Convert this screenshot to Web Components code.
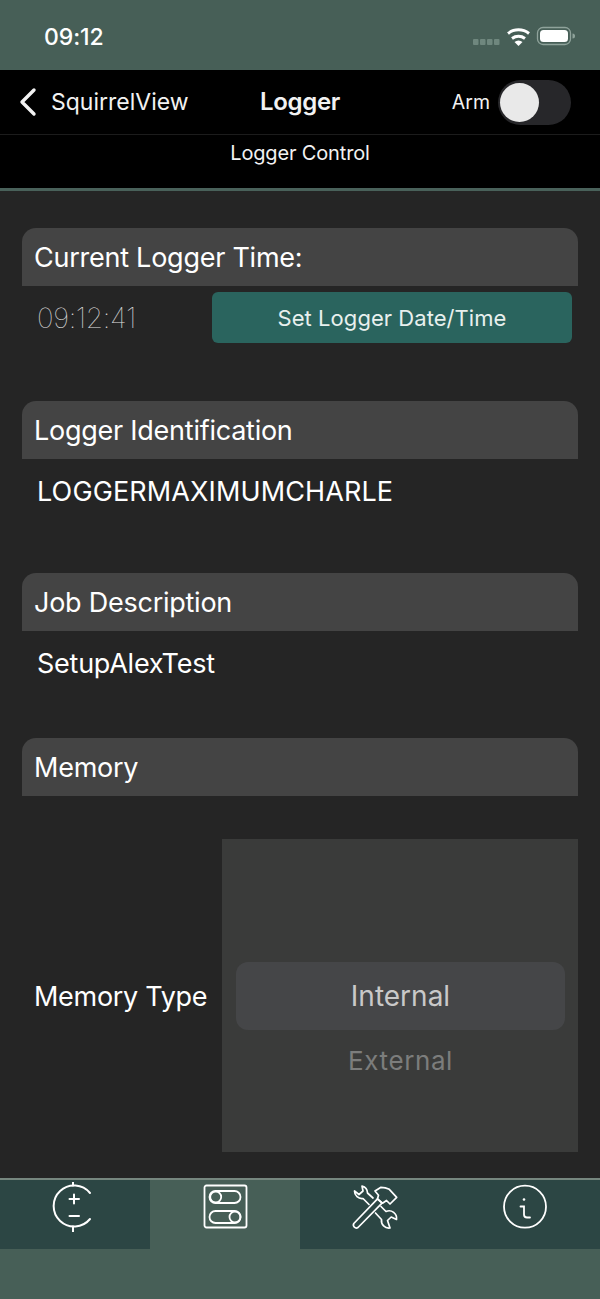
<!DOCTYPE html>
<html>
<head>
<meta charset="utf-8">
<title>Logger</title>
<style>
  html, body { margin: 0; padding: 0; background: #252525; }
  body { width: 600px; height: 1299px; overflow: hidden; font-family: Inter, "Liberation Sans", sans-serif; color: #fff; }
  app-screen { height: 1299px; }
</style>
</head>
<body>
<app-screen>
  <status-bar slot="top" time="09:12"></status-bar>
  <nav-bar slot="top" back="SquirrelView" title="Logger" subtitle="Logger Control"></nav-bar>

  <logger-section heading="Current Logger Time:" gap="56">
    <div style="display:flex;align-items:flex-start;padding:6px 6px 0 15px;">
      <span style="width:175px;font-size:28px;font-weight:100;line-height:53px;color:#e0e0e0;letter-spacing:-.35px;">09:12:41</span>
      <action-button>Set Logger Date/Time</action-button>
    </div>
  </logger-section>
  <logger-section heading="Logger Identification" gap="64">
    <field-value style="letter-spacing:.12px">LOGGERMAXIMUMCHARLE</field-value>
  </logger-section>
  <logger-section heading="Job Description" gap="57">
    <field-value>SetupAlexTest</field-value>
  </logger-section>
  <logger-section heading="Memory" gap="0">
    <memory-row label="Memory Type">
      <wheel-picker selected="Internal" next="External"></wheel-picker>
    </memory-row>
  </logger-section>

  <tab-bar slot="bottom">
    <tab-item>
      <svg viewBox="0 0 50 50" width="50" height="50" fill="none" stroke="#fff" stroke-width="2" stroke-linecap="round">
        <path d="M40 11A20.500 20.500 0 1 0 40 37"/>
        <path d="M23 0v3.500M23 44.500V50M19.500 17h9.500M24 12.500v9M19.500 34h9.500"/>
      </svg>
    </tab-item>
    <tab-item active>
      <svg viewBox="0 0 50 50" width="50" height="50" fill="none" stroke="#fff" stroke-width="1.800">
        <rect x="4.500" y="3.500" width="42" height="42" rx="2"/>
        <rect x="9.500" y="9" width="31" height="12" rx="6"/>
        <circle cx="15.700" cy="15" r="5.500"/>
        <rect x="9.500" y="29" width="31" height="12" rx="6"/>
        <circle cx="35" cy="35" r="5.500"/>
      </svg>
    </tab-item>
    <tab-item>
      <svg viewBox="0 0 50 50" width="50" height="50" fill="none" stroke="#fff" stroke-width="1.700" stroke-linejoin="round" stroke-linecap="round">
        <path d="M3.800 41.500 27.500 16.800l4.500 4.400L8 45.500a3 3 0 0 1-4.200-4Z"/>
        <path d="M25 9l6-3.700q4.500 0 8.300 2L46.700 15.300 40 22l-3.500-3.500-4 2.700-5-4.400 1-3.500Z"/>
        <path d="M23 16 17.500 11a7.500 7.500 0 0 0-5.500-7l1 5-4 3.500-4.500-3.500a7.500 7.500 0 0 0 8.500 7.500l6 6"/>
        <path d="M31 24.500 36 29.500a7.500 7.500 0 0 1 10.500 8l-5.300-2.500-3.700 3.500 2.500 7.500a7.500 7.500 0 0 1-8.500-8.500L25.500 31"/>
      </svg>
    </tab-item>
    <tab-item>
      <svg viewBox="0 0 50 50" width="50" height="50" fill="none" stroke="#fff" stroke-width="1.800">
        <circle cx="25" cy="24.700" r="21"/>
        <path d="M20.500 24.500h3.500v8q0 3 3 3h3" stroke-linecap="round"/>
        <circle cx="24" cy="17.500" r="1.300" fill="#fff" stroke="none"/>
      </svg>
    </tab-item>
  </tab-bar>
</app-screen>

<script>
class AppScreen extends HTMLElement {
  constructor() {
    super();
    this.attachShadow({ mode: 'open' });
    this.shadowRoot.innerHTML = `
      <style>
        :host { display: flex; flex-direction: column; background: #252525; }
        .content { flex: 1; min-height: 0; padding: 37px 22px 0; }
      </style>
      <slot name="top"></slot>
      <div class="content"><slot></slot></div>
      <slot name="bottom"></slot>
    `;
  }
}

class StatusBar extends HTMLElement {
  connectedCallback() {
    this.attachShadow({ mode: 'open' });
    this.shadowRoot.innerHTML = `
      <style>
        :host { display: flex; align-items: flex-start; justify-content: space-between; height: 70px; background: #475f57; box-sizing: border-box; padding: 22px 10px 0 44px; }
        .time { font-size: 23px; font-weight: 500; line-height: 28px; margin-top: 1px; color: #fff; letter-spacing: -.1px; }
        svg { display: block; margin-top: 4px; }
      </style>
      <span class="time">${this.getAttribute('time')}</span>
      <svg width="138" height="26" viewBox="0 0 138 26">
        <g fill="#6f877e">
          <rect x="21" y="13" width="5.500" height="6" rx="1"/><rect x="28" y="13" width="5.500" height="6" rx="1"/>
          <rect x="35" y="13" width="5.500" height="6" rx="1"/><rect x="42" y="13" width="5.500" height="6" rx="1"/>
        </g>
        <g fill="none" stroke="#fff" stroke-width="3">
          <path d="M56 7.500a17 17 0 0 1 21 0"/>
          <path d="M60 12.500a11 11 0 0 1 13 0"/>
        </g>
        <path d="M62.500 16a6 6 0 0 1 8 0L66.500 20Z" fill="#fff"/>
        <rect x="85.500" y="1.500" width="33" height="17" rx="5.500" fill="none" stroke="#8fa39b" stroke-width="1.300"/>
        <rect x="88" y="4" width="28" height="12" rx="3.500" fill="#fff"/>
        <path d="M120.500 7.500v5a2.500 2.500 0 0 0 0-5Z" fill="#8fa39b"/>
      </svg>
    `;
  }
}

class NavBar extends HTMLElement {
  connectedCallback() {
    this.attachShadow({ mode: 'open' });
    this.shadowRoot.innerHTML = `
      <style>
        :host { display: block; background: #000; color: #f2f2f2; border-bottom: 3px solid #49615a; }
        .bar { display: grid; grid-template-columns: 1fr auto 1fr; align-items: center; height: 64px; border-bottom: 1px solid #1c1c1c; padding: 0 29px; }
        .back { display: flex; align-items: center; gap: 13px; margin-left: -10px; font-size: 23px; letter-spacing: 0; }
        .title { font-size: 24px; font-weight: 600; letter-spacing: -.3px; margin-top: -2px; }
        .arm { display: flex; align-items: center; justify-content: flex-end; gap: 8px; font-size: 19.500px; }
        .sub { height: 53px; box-sizing: border-box; padding-top: 5px; text-align: center; font-size: 20px; line-height: 26px; letter-spacing: -.15px; }
        .track { display: flex; align-items: center; width: 73px; height: 45px; border-radius: 23px; background: #27272a; box-sizing: border-box; padding: 0 2px; }
        .knob { width: 39px; height: 39px; border-radius: 50%; background: #e9e9e9; }
        svg { display: block; }
      </style>
      <div class="bar">
        <div class="back">
          <svg width="19" height="30" viewBox="0 0 19 30" fill="none" stroke="#f2f2f2" stroke-width="3.400" stroke-linecap="round" stroke-linejoin="round"><path d="M15 3 3 15l12 12"/></svg>
          <span>${this.getAttribute('back')}</span>
        </div>
        <div class="title">${this.getAttribute('title')}</div>
        <div class="arm"><span>Arm</span><div class="track"><div class="knob"></div></div></div>
      </div>
      <div class="sub">${this.getAttribute('subtitle')}</div>
    `;
  }
}

class LoggerSection extends HTMLElement {
  connectedCallback() {
    this.attachShadow({ mode: 'open' });
    this.shadowRoot.innerHTML = `
      <style>
        :host { display: block; margin-bottom: ${this.getAttribute('gap')}px; }
        .head { height: 58px; box-sizing: border-box; padding: 0 12px; display: flex; align-items: center; background: #444; border-radius: 14px 14px 0 0; font-size: 27px; letter-spacing: -.25px; color: #fff; }
      </style>
      <div class="head">${this.getAttribute('heading')}</div>
      <slot></slot>
    `;
  }
}

class ActionButton extends HTMLElement {
  constructor() {
    super();
    this.attachShadow({ mode: 'open' });
    this.shadowRoot.innerHTML = `
      <style>
        :host { display: flex; align-items: center; justify-content: center; flex: 1; height: 51px; border-radius: 6px; background: #2a645e; color: #e8f0ee; font-size: 22px; letter-spacing: .05px; }
      </style>
      <slot></slot>
    `;
  }
}

class FieldValue extends HTMLElement {
  constructor() {
    super();
    this.attachShadow({ mode: 'open' });
    this.shadowRoot.innerHTML = `
      <style>
        :host { display: block; padding: 16px 15px 0; font-size: 27px; line-height: 34px; letter-spacing: -.25px; color: #fff; }
      </style>
      <slot></slot>
    `;
  }
}

class MemoryRow extends HTMLElement {
  connectedCallback() {
    this.attachShadow({ mode: 'open' });
    this.shadowRoot.innerHTML = `
      <style>
        :host { display: flex; align-items: center; margin-top: 43px; }
        .label { width: 200px; padding: 2px 0 0 12px; box-sizing: border-box; font-size: 27px; letter-spacing: -.3px; color: #fff; }
      </style>
      <div class="label">${this.getAttribute('label')}</div>
      <slot></slot>
    `;
  }
}

class WheelPicker extends HTMLElement {
  connectedCallback() {
    this.attachShadow({ mode: 'open' });
    this.shadowRoot.innerHTML = `
      <style>
        :host { display: flex; flex-direction: column; flex: 1; height: 313px; box-sizing: border-box; padding: 123px 13px 0 14px; background: #3a3b3a; }
        .sel { height: 68px; display: flex; align-items: center; justify-content: center; border-radius: 12px; background: #454648; color: #c9c9c9; font-size: 28px; letter-spacing: 0; }
        .next { margin-top: 15px; text-align: center; color: #7c7d7c; font-size: 26px; line-height: 32px; letter-spacing: .6px; }
      </style>
      <div class="sel">${this.getAttribute('selected')}</div>
      <div class="next">${this.getAttribute('next')}</div>
    `;
  }
}

class TabBar extends HTMLElement {
  constructor() {
    super();
    this.attachShadow({ mode: 'open' });
    this.shadowRoot.innerHTML = `
      <style>
        :host { display: grid; grid-template-columns: repeat(4, 1fr); height: 121px; box-sizing: border-box; padding-bottom: 50px; background: #475f57; border-top: 2px solid #76877f; }
      </style>
      <slot></slot>
    `;
  }
}

class TabItem extends HTMLElement {
  constructor() {
    super();
    this.attachShadow({ mode: 'open' });
    this.shadowRoot.innerHTML = `
      <style>
        :host { display: flex; justify-content: center; align-items: flex-start; padding-top: 2px; box-sizing: border-box; background: #2c4644; }
        :host([active]) { background: transparent; }
      </style>
      <slot></slot>
    `;
  }
}

customElements.define('app-screen', AppScreen);
customElements.define('status-bar', StatusBar);
customElements.define('nav-bar', NavBar);
customElements.define('logger-section', LoggerSection);
customElements.define('action-button', ActionButton);
customElements.define('field-value', FieldValue);
customElements.define('memory-row', MemoryRow);
customElements.define('wheel-picker', WheelPicker);
customElements.define('tab-bar', TabBar);
customElements.define('tab-item', TabItem);
</script>
</body>
</html>
